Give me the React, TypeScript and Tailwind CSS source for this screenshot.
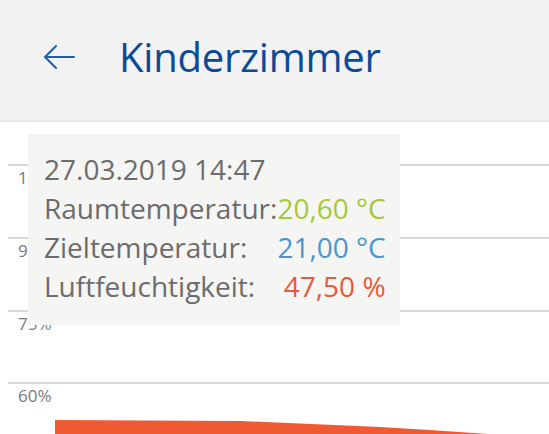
const GRID = [
  { label: '100%', top: 164 },
  { label: '90%', top: 237 },
  { label: '75%', top: 310 },
  { label: '60%', top: 382 },
]

const ROWS = [
  { label: 'Raumtemperatur:', value: '20,60 °C', color: 'text-[#a6c73a]' },
  { label: 'Zieltemperatur:', value: '21,00 °C', color: 'text-[#4a95cf]' },
  { label: 'Luftfeuchtigkeit:', value: '47,50 %', color: 'text-[#e8583a]' },
]

export default function App() {
  return (
    <div className="w-[549px] h-[434px] overflow-hidden bg-white font-['Open_Sans',sans-serif]">
      {/* Kopfzeile */}
      <header className="h-[122px] bg-[#f2f2f2] border-b-2 border-[#e6e6e6] flex items-center pl-[43px] pb-[6px]">
        <svg width="32" height="26" viewBox="0 0 32 26" fill="none" stroke="#1f5fa8" strokeWidth="2" strokeLinecap="round">
          <path d="M31 13H2M13 2L2 13l11 11" />
        </svg>
        <h1 className="ml-[44px] text-[40px] leading-none text-[#0b4a98] tracking-[-0.2px]">Kinderzimmer</h1>
      </header>

      {/* Diagramm */}
      <div className="relative h-[312px]">
        {GRID.map((g) => (
          <div key={g.label} className="absolute left-[8px] right-0" style={{ top: g.top - 122 }}>
            <div className="h-[2px] bg-[#d8d8d8]" />
            <div className="pl-[10px] pt-[3px] text-[17px] leading-none text-[#7a7a7a]">{g.label}</div>
          </div>
        ))}

        <svg className="absolute left-0 top-0" width="549" height="312" viewBox="0 122 549 312">
          <path d="M55 420 L240 421 L380 427 L430 430 L488 434 L55 434 Z" fill="#f05a32" />
        </svg>

        {/* Tooltip */}
        <div className="absolute left-[28px] top-[12px] w-[372px] h-[191px] bg-[#f5f5f3] pl-[16px] pt-[16px] text-[#6c6c6c] text-[28px] leading-[39px]">
          <div>27.03.2019 14:47</div>
          <div className="grid grid-cols-[auto_auto] w-max">
            {ROWS.map((r) => (
              <div key={r.label} className="contents">
                <span>{r.label}</span>
                <span className={`text-right ${r.color}`}>{r.value}</span>
              </div>
            ))}
          </div>
        </div>
      </div>
    </div>
  )
}
